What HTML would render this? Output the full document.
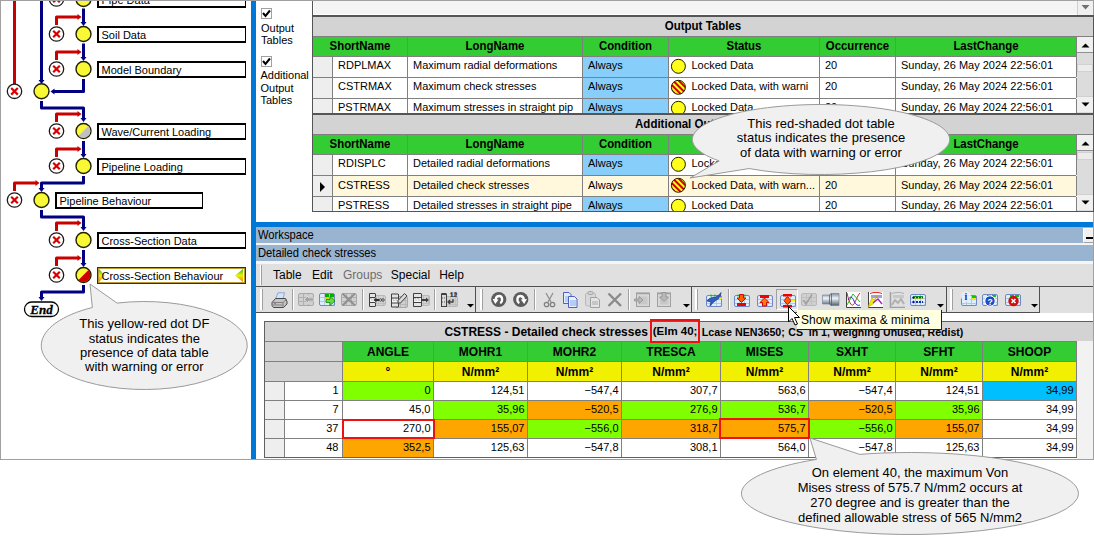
<!DOCTYPE html>
<html><head><meta charset="utf-8"><style>
*{box-sizing:border-box;margin:0;padding:0}
html,body{width:1094px;height:536px;overflow:hidden;background:#fff;font-family:"Liberation Sans", sans-serif;font-size:11px;color:#000}
.a{position:absolute}
.t{position:absolute;white-space:nowrap;line-height:1}
.c{position:absolute;white-space:nowrap;line-height:1;text-align:center}
.b{font-weight:bold}
</style></head><body>

<div class="a" style="left:0;top:0;width:251px;height:460px;border-left:1px solid #a0a0a0;border-top:1px solid #a0a0a0;border-bottom:1px solid #a0a0a0"></div>
<svg class="a" style="left:0;top:0" width="251" height="459"><line x1="14.5" y1="0" x2="14.5" y2="84" stroke="#c80000" stroke-width="3"/><line x1="41.5" y1="0" x2="41.5" y2="80" stroke="#000080" stroke-width="3"/><polygon points="41.5,84 38.5,80 44.5,80" fill="#000080"/><circle cx="56.5" cy="-1" r="7.2" fill="#fff" stroke="#1a1a1a" stroke-width="1.3"/><path d="M53.2,-4.3L59.8,2.3M59.8,-4.3L53.2,2.3" stroke="#d80000" stroke-width="2.2"/><circle cx="83.5" cy="-1" r="7.5" fill="#f8f835" stroke="#202000" stroke-width="1.4"/><polyline points="56.5,-10 56.5,-18 78.0,-18" fill="none" stroke="#c80000" stroke-width="3" stroke-linejoin="round"/><polygon points="81.5,-18 77.5,-21 77.5,-15" fill="#c80000"/><circle cx="56.5" cy="34" r="7.2" fill="#fff" stroke="#1a1a1a" stroke-width="1.3"/><path d="M53.2,30.7L59.8,37.3M59.8,30.7L53.2,37.3" stroke="#d80000" stroke-width="2.2"/><circle cx="83.5" cy="34" r="7.5" fill="#f8f835" stroke="#202000" stroke-width="1.4"/><polyline points="56.5,25 56.5,17 78.0,17" fill="none" stroke="#c80000" stroke-width="3" stroke-linejoin="round"/><polygon points="81.5,17 77.5,14 77.5,20" fill="#c80000"/><line x1="83.5" y1="8.5" x2="83.5" y2="22.5" stroke="#000080" stroke-width="3"/><polygon points="83.5,26 80.5,22 86.5,22" fill="#000080"/><circle cx="56.5" cy="69" r="7.2" fill="#fff" stroke="#1a1a1a" stroke-width="1.3"/><path d="M53.2,65.7L59.8,72.3M59.8,65.7L53.2,72.3" stroke="#d80000" stroke-width="2.2"/><circle cx="83.5" cy="69" r="7.5" fill="#f8f835" stroke="#202000" stroke-width="1.4"/><polyline points="56.5,60 56.5,52 78.0,52" fill="none" stroke="#c80000" stroke-width="3" stroke-linejoin="round"/><polygon points="81.5,52 77.5,49 77.5,55" fill="#c80000"/><line x1="83.5" y1="43.5" x2="83.5" y2="57.5" stroke="#000080" stroke-width="3"/><polygon points="83.5,61 80.5,57 86.5,57" fill="#000080"/><circle cx="14.5" cy="91.3" r="7.2" fill="#fff" stroke="#1a1a1a" stroke-width="1.3"/><path d="M11.2,88.0L17.8,94.6M17.8,88.0L11.2,94.6" stroke="#d80000" stroke-width="2.2"/><circle cx="41.5" cy="91.3" r="7.5" fill="#f8f835" stroke="#202000" stroke-width="1.4"/><polyline points="83.5,79 83.5,91.5 54.0,91.5" fill="none" stroke="#000080" stroke-width="3" stroke-linejoin="round"/><polygon points="50.5,91.5 54.5,88.5 54.5,94.5" fill="#000080"/><polyline points="41.5,101 41.5,108 83.5,108 83.5,118.5" fill="none" stroke="#000080" stroke-width="3" stroke-linejoin="round"/><polygon points="83.5,122 80.5,118 86.5,118" fill="#000080"/><circle cx="56.5" cy="131" r="7.2" fill="#fff" stroke="#1a1a1a" stroke-width="1.3"/><path d="M53.2,127.7L59.8,134.3M59.8,127.7L53.2,134.3" stroke="#d80000" stroke-width="2.2"/><circle cx="83.5" cy="131" r="7.5" fill="#f8f835" stroke="#202000" stroke-width="1.4"/><path d="M88.449,126.051 A7,7 0 0 1 78.551,135.949 Z" fill="#c0c0c0"/><polyline points="56.5,122 56.5,114 78.0,114" fill="none" stroke="#c80000" stroke-width="3" stroke-linejoin="round"/><polygon points="81.5,114 77.5,111 77.5,117" fill="#c80000"/><circle cx="56.5" cy="166" r="7.2" fill="#fff" stroke="#1a1a1a" stroke-width="1.3"/><path d="M53.2,162.7L59.8,169.3M59.8,162.7L53.2,169.3" stroke="#d80000" stroke-width="2.2"/><circle cx="83.5" cy="166" r="7.5" fill="#f8f835" stroke="#202000" stroke-width="1.4"/><polyline points="56.5,157 56.5,149 78.0,149" fill="none" stroke="#c80000" stroke-width="3" stroke-linejoin="round"/><polygon points="81.5,149 77.5,146 77.5,152" fill="#c80000"/><line x1="83.5" y1="141" x2="83.5" y2="154.5" stroke="#000080" stroke-width="3"/><polygon points="83.5,158 80.5,154 86.5,154" fill="#000080"/><polyline points="83.5,176 83.5,183 41.5,183 41.5,188.5" fill="none" stroke="#000080" stroke-width="3" stroke-linejoin="round"/><polygon points="41.5,192 38.5,188 44.5,188" fill="#000080"/><circle cx="14.5" cy="200" r="7.2" fill="#fff" stroke="#1a1a1a" stroke-width="1.3"/><path d="M11.2,196.7L17.8,203.3M17.8,196.7L11.2,203.3" stroke="#d80000" stroke-width="2.2"/><circle cx="41.5" cy="200" r="7.5" fill="#f8f835" stroke="#202000" stroke-width="1.4"/><polyline points="14.5,191 14.5,183 36.0,183" fill="none" stroke="#c80000" stroke-width="3" stroke-linejoin="round"/><polygon points="39.5,183 35.5,180 35.5,186" fill="#c80000"/><polyline points="41.5,210 41.5,217 83.5,217 83.5,227.5" fill="none" stroke="#000080" stroke-width="3" stroke-linejoin="round"/><polygon points="83.5,231 80.5,227 86.5,227" fill="#000080"/><circle cx="56.5" cy="240" r="7.2" fill="#fff" stroke="#1a1a1a" stroke-width="1.3"/><path d="M53.2,236.7L59.8,243.3M59.8,236.7L53.2,243.3" stroke="#d80000" stroke-width="2.2"/><circle cx="83.5" cy="240" r="7.5" fill="#f8f835" stroke="#202000" stroke-width="1.4"/><polyline points="56.5,231 56.5,223 78.0,223" fill="none" stroke="#c80000" stroke-width="3" stroke-linejoin="round"/><polygon points="81.5,223 77.5,220 77.5,226" fill="#c80000"/><circle cx="56.5" cy="275" r="7.2" fill="#fff" stroke="#1a1a1a" stroke-width="1.3"/><path d="M53.2,271.7L59.8,278.3M59.8,271.7L53.2,278.3" stroke="#d80000" stroke-width="2.2"/><circle cx="83.5" cy="275" r="7.5" fill="#f8f835" stroke="#202000" stroke-width="1.4"/><path d="M88.449,270.051 A7,7 0 0 1 78.551,279.949 Z" fill="#d00000"/><polyline points="56.5,266 56.5,258 78.0,258" fill="none" stroke="#c80000" stroke-width="3" stroke-linejoin="round"/><polygon points="81.5,258 77.5,255 77.5,261" fill="#c80000"/><line x1="83.5" y1="250" x2="83.5" y2="263.5" stroke="#000080" stroke-width="3"/><polygon points="83.5,267 80.5,263 86.5,263" fill="#000080"/><polyline points="83.5,285 83.5,292 41.5,292 41.5,297.5" fill="none" stroke="#000080" stroke-width="3" stroke-linejoin="round"/><polygon points="41.5,301 38.5,297 44.5,297" fill="#000080"/><rect x="24.5" y="302" width="34" height="14.5" rx="7.2" fill="#fff" stroke="#000" stroke-width="1.3"/><text x="41.5" y="314" text-anchor="middle" font-family="Liberation Serif" font-weight="bold" font-style="italic" font-size="13" stroke="#000" stroke-width="0.3">End</text></svg>
<div class="a" style="left:97px;top:-9px;width:149px;height:17px;border:2px solid #000;border-right-width:1px;background:#fff"></div>
<div class="t" style="left:101.5px;top:-5.2px;font-size:11px;transform:scaleY(1.07);transform-origin:0 84.65%">Pipe Data</div>
<div class="a" style="left:97px;top:26px;width:149px;height:17px;border:2px solid #000;border-right-width:1px;background:#fff"></div>
<div class="t" style="left:101.5px;top:29.8px;font-size:11px;transform:scaleY(1.07);transform-origin:0 84.65%">Soil Data</div>
<div class="a" style="left:97px;top:61px;width:149px;height:17px;border:2px solid #000;border-right-width:1px;background:#fff"></div>
<div class="t" style="left:101.5px;top:64.8px;font-size:11px;transform:scaleY(1.07);transform-origin:0 84.65%">Model Boundary</div>
<div class="a" style="left:97px;top:123px;width:149px;height:17px;border:2px solid #000;border-right-width:1px;background:#fff"></div>
<div class="t" style="left:101.5px;top:126.8px;font-size:11px;transform:scaleY(1.07);transform-origin:0 84.65%">Wave/Current Loading</div>
<div class="a" style="left:97px;top:158px;width:149px;height:17px;border:2px solid #000;border-right-width:1px;background:#fff"></div>
<div class="t" style="left:101.5px;top:161.8px;font-size:11px;transform:scaleY(1.07);transform-origin:0 84.65%">Pipeline Loading</div>
<div class="a" style="left:55px;top:192px;width:148px;height:17px;border:2px solid #000;border-right-width:1px;background:#fff"></div>
<div class="t" style="left:59.5px;top:195.8px;font-size:11px;transform:scaleY(1.07);transform-origin:0 84.65%">Pipeline Behaviour</div>
<div class="a" style="left:97px;top:232px;width:149px;height:17px;border:2px solid #000;border-right-width:1px;background:#fff"></div>
<div class="t" style="left:101.5px;top:235.8px;font-size:11px;transform:scaleY(1.07);transform-origin:0 84.65%">Cross-Section Data</div>
<div class="a" style="left:97px;top:267px;width:149px;height:17px;border:2px solid #3a3000;border-right-width:1px;background:#fff"></div>
<div class="a" style="left:98px;top:268px;width:147px;height:15px;border:1px solid #b89a30"></div>
<svg class="a" style="left:99px;top:269px" width="145" height="13"><defs><linearGradient id="tg" x1="0" y1="0" x2="0" y2="1"><stop offset="0" stop-color="#20c020"/><stop offset="0.5" stop-color="#f0f000"/><stop offset="1" stop-color="#f08000"/></linearGradient></defs><polygon points="0,0 6,6.5 0,13" fill="url(#tg)"/><polygon points="144,0 136,6.5 144,13" fill="url(#tg)"/></svg>
<div class="t" style="left:101.5px;top:270.8px;font-size:11px;transform:scaleY(1.07);transform-origin:0 84.65%">Cross-Section Behaviour</div>
<div class="a" style="left:251px;top:1px;width:5px;height:458px;background:#0078d7"></div>
<div class="a" style="left:256px;top:222px;width:837px;height:5px;background:#0078d7"></div>
<div class="a" style="left:256px;top:0;width:838px;height:1px;background:#a0a0a0"></div>
<div class="a" style="left:1093px;top:0;width:1px;height:460px;background:#a0a0a0"></div>
<div class="a" style="left:261px;top:8px;width:11px;height:11px;border:1px solid #a0a0a0;background:#fff"></div>
<svg class="a" style="left:261px;top:8px" width="11" height="11"><path d="M2,5 L4.5,8 L9,2.5" fill="none" stroke="#000" stroke-width="2"/></svg>
<div class="t" style="left:261px;top:21.7px;font-size:11px;line-height:12.6px">Output<br>Tables</div>
<div class="a" style="left:261px;top:56px;width:11px;height:11px;border:1px solid #a0a0a0;background:#fff"></div>
<svg class="a" style="left:261px;top:56px" width="11" height="11"><path d="M2,5 L4.5,8 L9,2.5" fill="none" stroke="#000" stroke-width="2"/></svg>
<div class="t" style="left:260.5px;top:69.4px;font-size:11px;line-height:12.3px">Additional<br>Output<br>Tables</div>
<div class="a" style="left:312px;top:1px;width:1px;height:211px;background:#555555;"></div>
<div class="a" style="left:313px;top:1px;width:764px;height:14px;background:#f4f4f4;border-left:1px solid #fff;border-bottom:1px solid #fff"></div>
<div class="a" style="left:1077px;top:1px;width:16px;height:14px;background:#f0f0f0;border-left:1px solid #d0d0d0"></div>
<svg class="a" style="left:1081px;top:5px" width="9" height="5"><polygon points="0.5,0 8.5,0 4.5,4.5" fill="#707070"/></svg>
<div class="a" style="left:312px;top:15px;width:782px;height:2px;background:#555555;"></div>
<div class="a" style="left:313px;top:17px;width:780px;height:19px;background:#d3d3d3;"></div>
<div class="a" style="left:313px;top:36px;width:780px;height:1px;background:#808080;"></div>
<div class="t" style="left:313px;width:780px;text-align:center;top:20.97px;font-size:11.5px;font-weight:bold;color:#000;transform:scaleY(1.12);transform-origin:0 84.65%;">Output Tables</div>
<div class="a" style="left:313px;top:37px;width:763px;height:19px;background:#33cc33;"></div>
<div class="a" style="left:313px;top:56px;width:763px;height:1px;background:#808080;"></div>
<div class="t" style="left:313px;width:94px;text-align:center;top:41.25px;font-size:11.4px;font-weight:bold;color:#000;transform:scaleY(1.1);transform-origin:0 84.65%;">ShortName</div>
<div class="a" style="left:407px;top:37px;width:1px;height:20px;background:#808080;"></div>
<div class="t" style="left:408px;width:174px;text-align:center;top:41.25px;font-size:11.4px;font-weight:bold;color:#000;transform:scaleY(1.1);transform-origin:0 84.65%;">LongName</div>
<div class="a" style="left:582px;top:37px;width:1px;height:20px;background:#808080;"></div>
<div class="t" style="left:583px;width:85px;text-align:center;top:41.25px;font-size:11.4px;font-weight:bold;color:#000;transform:scaleY(1.1);transform-origin:0 84.65%;">Condition</div>
<div class="a" style="left:668px;top:37px;width:1px;height:20px;background:#808080;"></div>
<div class="t" style="left:669px;width:150px;text-align:center;top:41.25px;font-size:11.4px;font-weight:bold;color:#000;transform:scaleY(1.1);transform-origin:0 84.65%;">Status</div>
<div class="a" style="left:819px;top:37px;width:1px;height:20px;background:#808080;"></div>
<div class="t" style="left:820px;width:75px;text-align:center;top:41.25px;font-size:11.4px;font-weight:bold;color:#000;transform:scaleY(1.1);transform-origin:0 84.65%;">Occurrence</div>
<div class="a" style="left:895px;top:37px;width:1px;height:20px;background:#808080;"></div>
<div class="t" style="left:896px;width:180px;text-align:center;top:41.25px;font-size:11.4px;font-weight:bold;color:#000;transform:scaleY(1.1);transform-origin:0 84.65%;">LastChange</div>
<div class="a" style="left:1076px;top:37px;width:1px;height:20px;background:#808080;"></div>
<div class="a" style="left:313px;top:57px;width:19px;height:20px;background:#eeeeee;"></div>
<div class="a" style="left:332px;top:57px;width:1px;height:20px;background:#808080;"></div>
<div class="a" style="left:333px;top:57px;width:743px;height:20px;background:#fff;"></div>
<div class="a" style="left:583px;top:57px;width:85px;height:20px;background:#87cefa;"></div>
<div class="a" style="left:407px;top:57px;width:1px;height:20px;background:#808080;"></div>
<div class="a" style="left:582px;top:57px;width:1px;height:20px;background:#808080;"></div>
<div class="a" style="left:668px;top:57px;width:1px;height:20px;background:#808080;"></div>
<div class="a" style="left:819px;top:57px;width:1px;height:20px;background:#808080;"></div>
<div class="a" style="left:895px;top:57px;width:1px;height:20px;background:#808080;"></div>
<div class="a" style="left:1076px;top:57px;width:1px;height:20px;background:#808080;"></div>
<div class="a" style="left:313px;top:77px;width:763px;height:1px;background:#808080;"></div>
<div class="t" style="left:338px;top:59.89px;font-size:11px;color:#000;transform:scaleY(1.06);transform-origin:0 84.65%;">RDPLMAX</div>
<div class="t" style="left:413px;top:59.89px;font-size:11px;color:#000;transform:scaleY(1.06);transform-origin:0 84.65%;">Maximum radial deformations</div>
<div class="t" style="left:588px;top:59.89px;font-size:11px;color:#000;transform:scaleY(1.06);transform-origin:0 84.65%;">Always</div>
<svg class="a" style="left:669px;top:57px" width="20" height="20"><circle cx="9.4" cy="9.3" r="7" fill="#ffff1a" stroke="#202000" stroke-width="1"/></svg>
<div class="a" style="left:689px;top:57px;width:130px;height:20px;overflow:hidden"><div class="t" style="left:2.5px;top:2.89px">Locked Data</div></div>
<div class="t" style="left:825px;top:59.89px;font-size:11px;color:#000;transform:scaleY(1.06);transform-origin:0 84.65%;">20</div>
<div class="t" style="left:901px;top:59.89px;font-size:11px;color:#000;transform:scaleY(1.06);transform-origin:0 84.65%;">Sunday, 26 May 2024 22:56:01</div>
<div class="a" style="left:313px;top:78px;width:19px;height:20px;background:#eeeeee;"></div>
<div class="a" style="left:332px;top:78px;width:1px;height:20px;background:#808080;"></div>
<div class="a" style="left:333px;top:78px;width:743px;height:20px;background:#fff;"></div>
<div class="a" style="left:583px;top:78px;width:85px;height:20px;background:#87cefa;"></div>
<div class="a" style="left:407px;top:78px;width:1px;height:20px;background:#808080;"></div>
<div class="a" style="left:582px;top:78px;width:1px;height:20px;background:#808080;"></div>
<div class="a" style="left:668px;top:78px;width:1px;height:20px;background:#808080;"></div>
<div class="a" style="left:819px;top:78px;width:1px;height:20px;background:#808080;"></div>
<div class="a" style="left:895px;top:78px;width:1px;height:20px;background:#808080;"></div>
<div class="a" style="left:1076px;top:78px;width:1px;height:20px;background:#808080;"></div>
<div class="a" style="left:313px;top:98px;width:763px;height:1px;background:#808080;"></div>
<div class="t" style="left:338px;top:80.89px;font-size:11px;color:#000;transform:scaleY(1.06);transform-origin:0 84.65%;">CSTRMAX</div>
<div class="t" style="left:413px;top:80.89px;font-size:11px;color:#000;transform:scaleY(1.06);transform-origin:0 84.65%;">Maximum check stresses</div>
<div class="t" style="left:588px;top:80.89px;font-size:11px;color:#000;transform:scaleY(1.06);transform-origin:0 84.65%;">Always</div>
<svg class="a" style="left:669px;top:78px" width="20" height="20"><defs><pattern id="st17" width="4" height="4" patternUnits="userSpaceOnUse" patternTransform="rotate(-45)"><rect width="4" height="4" fill="#ffff1a"/><rect width="2" height="4" fill="#d00000"/></pattern></defs><circle cx="9.4" cy="9.3" r="7" fill="url(#st17)" stroke="#202000" stroke-width="1"/></svg>
<div class="a" style="left:689px;top:78px;width:130px;height:20px;overflow:hidden"><div class="t" style="left:2.5px;top:2.89px">Locked Data, with warni</div></div>
<div class="t" style="left:825px;top:80.89px;font-size:11px;color:#000;transform:scaleY(1.06);transform-origin:0 84.65%;">20</div>
<div class="t" style="left:901px;top:80.89px;font-size:11px;color:#000;transform:scaleY(1.06);transform-origin:0 84.65%;">Sunday, 26 May 2024 22:56:01</div>
<div class="a" style="left:313px;top:99px;width:19px;height:14px;background:#eeeeee;"></div>
<div class="a" style="left:332px;top:99px;width:1px;height:14px;background:#808080;"></div>
<div class="a" style="left:333px;top:99px;width:743px;height:14px;background:#fff;"></div>
<div class="a" style="left:583px;top:99px;width:85px;height:14px;background:#87cefa;"></div>
<div class="a" style="left:407px;top:99px;width:1px;height:14px;background:#808080;"></div>
<div class="a" style="left:582px;top:99px;width:1px;height:14px;background:#808080;"></div>
<div class="a" style="left:668px;top:99px;width:1px;height:14px;background:#808080;"></div>
<div class="a" style="left:819px;top:99px;width:1px;height:14px;background:#808080;"></div>
<div class="a" style="left:895px;top:99px;width:1px;height:14px;background:#808080;"></div>
<div class="a" style="left:1076px;top:99px;width:1px;height:14px;background:#808080;"></div>
<div class="t" style="left:338px;top:101.89px;font-size:11px;color:#000;transform:scaleY(1.06);transform-origin:0 84.65%;">PSTRMAX</div>
<div class="t" style="left:413px;top:101.89px;font-size:11px;color:#000;transform:scaleY(1.06);transform-origin:0 84.65%;">Maximum stresses in straight pip</div>
<div class="t" style="left:588px;top:101.89px;font-size:11px;color:#000;transform:scaleY(1.06);transform-origin:0 84.65%;">Always</div>
<svg class="a" style="left:669px;top:99px" width="20" height="14"><circle cx="9.4" cy="9.3" r="7" fill="#ffff1a" stroke="#202000" stroke-width="1"/></svg>
<div class="a" style="left:689px;top:99px;width:130px;height:14px;overflow:hidden"><div class="t" style="left:2.5px;top:2.89px">Locked Data</div></div>
<div class="t" style="left:825px;top:101.89px;font-size:11px;color:#000;transform:scaleY(1.06);transform-origin:0 84.65%;">20</div>
<div class="t" style="left:901px;top:101.89px;font-size:11px;color:#000;transform:scaleY(1.06);transform-origin:0 84.65%;">Sunday, 26 May 2024 22:56:01</div>
<div class="a" style="left:1077px;top:37px;width:16px;height:16px;background:#f0f0f0;border-bottom:1px solid #909090"></div>
<svg class="a" style="left:1081px;top:43px" width="9" height="5"><polygon points="0.5,4.5 4.5,0.5 8.5,4.5" fill="#000"/></svg>
<div class="a" style="left:1077px;top:53px;width:16px;height:60px;background:#dcdcdc;"></div>
<div class="a" style="left:1077px;top:64px;width:16px;height:8px;background:#ececec;border:1px solid #d0d0d0"></div>
<div class="a" style="left:1077px;top:96px;width:16px;height:16px;background:#f0f0f0;border-top:1px solid #d0d0d0"></div>
<svg class="a" style="left:1081px;top:102px" width="9" height="5"><polygon points="0.5,0.5 8.5,0.5 4.5,4.5" fill="#000"/></svg>
<div class="a" style="left:1093px;top:15px;width:1px;height:98px;background:#555555;"></div>
<div class="a" style="left:312px;top:113px;width:782px;height:2px;background:#555555;"></div>
<div class="a" style="left:313px;top:115px;width:780px;height:19px;background:#d3d3d3;"></div>
<div class="a" style="left:313px;top:134px;width:780px;height:1px;background:#808080;"></div>
<div class="t" style="left:313px;width:780px;text-align:center;top:118.97px;font-size:11.5px;font-weight:bold;color:#000;transform:scaleY(1.12);transform-origin:0 84.65%;">Additional Output Tables</div>
<div class="a" style="left:313px;top:135px;width:763px;height:19px;background:#33cc33;"></div>
<div class="a" style="left:313px;top:154px;width:763px;height:1px;background:#808080;"></div>
<div class="t" style="left:313px;width:94px;text-align:center;top:139.25px;font-size:11.4px;font-weight:bold;color:#000;transform:scaleY(1.1);transform-origin:0 84.65%;">ShortName</div>
<div class="a" style="left:407px;top:135px;width:1px;height:20px;background:#808080;"></div>
<div class="t" style="left:408px;width:174px;text-align:center;top:139.25px;font-size:11.4px;font-weight:bold;color:#000;transform:scaleY(1.1);transform-origin:0 84.65%;">LongName</div>
<div class="a" style="left:582px;top:135px;width:1px;height:20px;background:#808080;"></div>
<div class="t" style="left:583px;width:85px;text-align:center;top:139.25px;font-size:11.4px;font-weight:bold;color:#000;transform:scaleY(1.1);transform-origin:0 84.65%;">Condition</div>
<div class="a" style="left:668px;top:135px;width:1px;height:20px;background:#808080;"></div>
<div class="t" style="left:669px;width:150px;text-align:center;top:139.25px;font-size:11.4px;font-weight:bold;color:#000;transform:scaleY(1.1);transform-origin:0 84.65%;">Status</div>
<div class="a" style="left:819px;top:135px;width:1px;height:20px;background:#808080;"></div>
<div class="t" style="left:820px;width:75px;text-align:center;top:139.25px;font-size:11.4px;font-weight:bold;color:#000;transform:scaleY(1.1);transform-origin:0 84.65%;">Occurrence</div>
<div class="a" style="left:895px;top:135px;width:1px;height:20px;background:#808080;"></div>
<div class="t" style="left:896px;width:180px;text-align:center;top:139.25px;font-size:11.4px;font-weight:bold;color:#000;transform:scaleY(1.1);transform-origin:0 84.65%;">LastChange</div>
<div class="a" style="left:1076px;top:135px;width:1px;height:20px;background:#808080;"></div>
<div class="a" style="left:313px;top:155px;width:19px;height:20px;background:#eeeeee;"></div>
<div class="a" style="left:332px;top:155px;width:1px;height:20px;background:#808080;"></div>
<div class="a" style="left:333px;top:155px;width:743px;height:20px;background:#fff;"></div>
<div class="a" style="left:583px;top:155px;width:85px;height:20px;background:#87cefa;"></div>
<div class="a" style="left:407px;top:155px;width:1px;height:20px;background:#808080;"></div>
<div class="a" style="left:582px;top:155px;width:1px;height:20px;background:#808080;"></div>
<div class="a" style="left:668px;top:155px;width:1px;height:20px;background:#808080;"></div>
<div class="a" style="left:819px;top:155px;width:1px;height:20px;background:#808080;"></div>
<div class="a" style="left:895px;top:155px;width:1px;height:20px;background:#808080;"></div>
<div class="a" style="left:1076px;top:155px;width:1px;height:20px;background:#808080;"></div>
<div class="a" style="left:313px;top:175px;width:763px;height:1px;background:#808080;"></div>
<div class="t" style="left:338px;top:157.89px;font-size:11px;color:#000;transform:scaleY(1.06);transform-origin:0 84.65%;">RDISPLC</div>
<div class="t" style="left:413px;top:157.89px;font-size:11px;color:#000;transform:scaleY(1.06);transform-origin:0 84.65%;">Detailed radial deformations</div>
<div class="t" style="left:588px;top:157.89px;font-size:11px;color:#000;transform:scaleY(1.06);transform-origin:0 84.65%;">Always</div>
<svg class="a" style="left:669px;top:155px" width="20" height="20"><circle cx="9.4" cy="9.3" r="7" fill="#ffff1a" stroke="#202000" stroke-width="1"/></svg>
<div class="a" style="left:689px;top:155px;width:130px;height:20px;overflow:hidden"><div class="t" style="left:2.5px;top:2.89px">Locked Data</div></div>
<div class="t" style="left:825px;top:157.89px;font-size:11px;color:#000;transform:scaleY(1.06);transform-origin:0 84.65%;">20</div>
<div class="t" style="left:901px;top:157.89px;font-size:11px;color:#000;transform:scaleY(1.06);transform-origin:0 84.65%;">Sunday, 26 May 2024 22:56:01</div>
<div class="a" style="left:313px;top:176px;width:19px;height:20px;background:#eeeeee;"></div>
<div class="a" style="left:332px;top:176px;width:1px;height:20px;background:#808080;"></div>
<div class="a" style="left:333px;top:176px;width:743px;height:20px;background:#fff8dc;"></div>
<div class="a" style="left:583px;top:176px;width:85px;height:20px;background:#fff8dc;"></div>
<div class="a" style="left:407px;top:176px;width:1px;height:20px;background:#808080;"></div>
<div class="a" style="left:582px;top:176px;width:1px;height:20px;background:#808080;"></div>
<div class="a" style="left:668px;top:176px;width:1px;height:20px;background:#808080;"></div>
<div class="a" style="left:819px;top:176px;width:1px;height:20px;background:#808080;"></div>
<div class="a" style="left:895px;top:176px;width:1px;height:20px;background:#808080;"></div>
<div class="a" style="left:1076px;top:176px;width:1px;height:20px;background:#808080;"></div>
<div class="a" style="left:313px;top:196px;width:763px;height:1px;background:#808080;"></div>
<svg class="a" style="left:319px;top:182px" width="8" height="10"><polygon points="1,0 6,5 1,10" fill="#000"/></svg>
<div class="t" style="left:338px;top:180.29px;font-size:11px;color:#000;transform:scaleY(1.06);transform-origin:0 84.65%;">CSTRESS</div>
<div class="t" style="left:413px;top:180.29px;font-size:11px;color:#000;transform:scaleY(1.06);transform-origin:0 84.65%;">Detailed check stresses</div>
<div class="t" style="left:588px;top:180.29px;font-size:11px;color:#000;transform:scaleY(1.06);transform-origin:0 84.65%;">Always</div>
<svg class="a" style="left:669px;top:176px" width="20" height="20"><defs><pattern id="st115" width="4" height="4" patternUnits="userSpaceOnUse" patternTransform="rotate(-45)"><rect width="4" height="4" fill="#ffff1a"/><rect width="2" height="4" fill="#d00000"/></pattern></defs><circle cx="9.4" cy="9.3" r="7" fill="url(#st115)" stroke="#202000" stroke-width="1"/></svg>
<div class="a" style="left:689px;top:176px;width:130px;height:20px;overflow:hidden"><div class="t" style="left:2.5px;top:4.29px">Locked Data, with warn...</div></div>
<div class="t" style="left:825px;top:180.29px;font-size:11px;color:#000;transform:scaleY(1.06);transform-origin:0 84.65%;">20</div>
<div class="t" style="left:901px;top:180.29px;font-size:11px;color:#000;transform:scaleY(1.06);transform-origin:0 84.65%;">Sunday, 26 May 2024 22:56:01</div>
<div class="a" style="left:313px;top:197px;width:19px;height:14px;background:#eeeeee;"></div>
<div class="a" style="left:332px;top:197px;width:1px;height:14px;background:#808080;"></div>
<div class="a" style="left:333px;top:197px;width:743px;height:14px;background:#fff;"></div>
<div class="a" style="left:583px;top:197px;width:85px;height:14px;background:#87cefa;"></div>
<div class="a" style="left:407px;top:197px;width:1px;height:14px;background:#808080;"></div>
<div class="a" style="left:582px;top:197px;width:1px;height:14px;background:#808080;"></div>
<div class="a" style="left:668px;top:197px;width:1px;height:14px;background:#808080;"></div>
<div class="a" style="left:819px;top:197px;width:1px;height:14px;background:#808080;"></div>
<div class="a" style="left:895px;top:197px;width:1px;height:14px;background:#808080;"></div>
<div class="a" style="left:1076px;top:197px;width:1px;height:14px;background:#808080;"></div>
<div class="t" style="left:338px;top:199.89px;font-size:11px;color:#000;transform:scaleY(1.06);transform-origin:0 84.65%;">PSTRESS</div>
<div class="t" style="left:413px;top:199.89px;font-size:11px;color:#000;transform:scaleY(1.06);transform-origin:0 84.65%;">Detailed stresses in straight pipe</div>
<div class="t" style="left:588px;top:199.89px;font-size:11px;color:#000;transform:scaleY(1.06);transform-origin:0 84.65%;">Always</div>
<svg class="a" style="left:669px;top:197px" width="20" height="14"><circle cx="9.4" cy="9.3" r="7" fill="#ffff1a" stroke="#202000" stroke-width="1"/></svg>
<div class="a" style="left:689px;top:197px;width:130px;height:14px;overflow:hidden"><div class="t" style="left:2.5px;top:2.89px">Locked Data</div></div>
<div class="t" style="left:825px;top:199.89px;font-size:11px;color:#000;transform:scaleY(1.06);transform-origin:0 84.65%;">20</div>
<div class="t" style="left:901px;top:199.89px;font-size:11px;color:#000;transform:scaleY(1.06);transform-origin:0 84.65%;">Sunday, 26 May 2024 22:56:01</div>
<div class="a" style="left:1077px;top:135px;width:16px;height:16px;background:#f0f0f0;border-bottom:1px solid #909090"></div>
<svg class="a" style="left:1081px;top:141px" width="9" height="5"><polygon points="0.5,4.5 4.5,0.5 8.5,4.5" fill="#000"/></svg>
<div class="a" style="left:1077px;top:151px;width:16px;height:60px;background:#dcdcdc;"></div>
<div class="a" style="left:1077px;top:152px;width:16px;height:8px;background:#ececec;border:1px solid #d0d0d0"></div>
<div class="a" style="left:1077px;top:194px;width:16px;height:16px;background:#f0f0f0;border-top:1px solid #d0d0d0"></div>
<svg class="a" style="left:1081px;top:200px" width="9" height="5"><polygon points="0.5,0.5 8.5,0.5 4.5,4.5" fill="#000"/></svg>
<div class="a" style="left:1093px;top:113px;width:1px;height:98px;background:#555555;"></div>
<div class="a" style="left:312px;top:211px;width:782px;height:1px;background:#555555;"></div>
<div class="a" style="left:256px;top:227px;width:837px;height:16px;background:#99b4d1;"></div>
<div class="a" style="left:256px;top:243px;width:837px;height:2px;background:#f4f4f4;"></div>
<div class="a" style="left:256px;top:245px;width:837px;height:16px;background:#99b4d1;"></div>
<div class="t" style="left:258px;top:229.72px;font-size:11.2px;color:#000;transform:scaleY(1.08);transform-origin:0 84.65%;">Workspace</div>
<div class="t" style="left:258px;top:247.52px;font-size:11.2px;color:#000;transform:scaleY(1.08);transform-origin:0 84.65%;">Detailed check stresses</div>
<div class="a" style="left:1083px;top:228px;width:10px;height:15px;background:#f0f0f0;border-left:1px solid #fff;border-top:1px solid #fff;border-bottom:1px solid #a0a0a0"></div>
<div class="a" style="left:1086px;top:237px;width:7px;height:2px;background:#000;"></div>
<div class="a" style="left:256px;top:261px;width:837px;height:3px;background:#f5f5f5;"></div>
<div class="a" style="left:256px;top:264px;width:837px;height:22px;background:#e0e0e0;"></div>
<div class="a" style="left:260px;top:265px;width:2px;height:20px;background:#fff;border-right:1px solid #a0a0a0"></div>
<div class="t" style="left:273px;top:269.04px;font-size:12px;color:#000;">Table</div>
<div class="t" style="left:312px;top:269.04px;font-size:12px;color:#000;">Edit</div>
<div class="t" style="left:343px;top:269.04px;font-size:12px;color:#6d6d6d;">Groups</div>
<div class="t" style="left:390.8px;top:269.04px;font-size:12px;color:#000;">Special</div>
<div class="t" style="left:439.2px;top:269.04px;font-size:12px;color:#000;">Help</div>
<div class="a" style="left:256px;top:286px;width:837px;height:1px;background:#505050;"></div>
<div class="a" style="left:256px;top:287px;width:837px;height:25px;background:#e0e0e0;"></div>
<div class="a" style="left:256px;top:312px;width:784px;height:1px;background:#505050;"></div>
<div class="a" style="left:475px;top:286px;width:1px;height:27px;background:#505050;"></div>
<div class="a" style="left:691px;top:286px;width:1px;height:27px;background:#505050;"></div>
<div class="a" style="left:946px;top:286px;width:1px;height:27px;background:#505050;"></div>
<div class="a" style="left:1039px;top:286px;width:1px;height:27px;background:#505050;"></div>
<div class="a" style="left:1040px;top:312px;width:53px;height:1px;background:#e0e0e0;"></div>
<svg class="a" style="left:271px;top:292px" width="17" height="16" viewBox="0 0 17 16"><path d="M4.5,7 L7,0.8 L13.5,0.8 L12,7Z" fill="#d0e4ff" stroke="#8098c8" stroke-width="0.8"/><path d="M1,10.5 L4.5,6.5 L14.5,6.5 L16,9.5 V12 L12.5,15.5 H2.5 L1,13.5Z" fill="#c4c4c4" stroke="#484848" stroke-width="1"/><path d="M1.5,10.5 H12 L16,7 M12,10.5 V15 M2,13 H11.5" fill="none" stroke="#7a7a7a" stroke-width="0.9"/><rect x="3" y="11.2" width="2" height="1" fill="#3a3"/></svg>
<div class="a" style="left:260px;top:289px;width:3px;height:21px;border-left:2px solid #fff;border-right:1px solid #a0a0a0"></div>
<div class="a" style="left:292px;top:289px;width:2px;height:21px;border-left:1px solid #a0a0a0;border-right:1px solid #fff"></div>
<svg class="a" style="left:298px;top:293px" width="17" height="14" viewBox="0 0 17 14"><rect x="0.5" y="0.5" width="15" height="12" rx="1.5" fill="#d0d0d0" stroke="#a8a8a8"/><path d="M1,4.5H15M1,8.5H15M5.5,1V12M10.5,1V12" stroke="#b0b0b0" stroke-width="1"/><path d="M6.5,6.5 L10.5,2.5 V5 H16 V8 H10.5 V10.5Z" fill="#a0a0a0" stroke="#e8e8e8" stroke-width="0.7"/></svg>
<svg class="a" style="left:319px;top:293px" width="17" height="14" viewBox="0 0 17 14"><rect x="1" y="1" width="15" height="12" rx="1.5" fill="#7f8fb8"/><rect x="0.5" y="0.5" width="15" height="12" rx="1.5" fill="#dcefff" stroke="#7088c8"/><path d="M1,4.5H15M1,8.5H15M5.5,1V12M10.5,1V12" stroke="#b8c8d8" stroke-width="1"/><rect x="6" y="1" width="4" height="3" fill="#00b000"/><rect x="11" y="1" width="4" height="3" fill="#00b000"/><rect x="6" y="4" width="9" height="2" fill="#e0d000"/><path d="M7,6.5 H11 V3.5 L16,8 L11,12.5 V9.5 H7Z" fill="#60e040" stroke="#108010" stroke-width="0.8"/></svg>
<svg class="a" style="left:341px;top:293px" width="17" height="14" viewBox="0 0 17 14"><rect x="0.5" y="0.5" width="15" height="12" rx="1.5" fill="#d0d0d0" stroke="#a8a8a8"/><path d="M1,4.5H15M1,8.5H15M5.5,1V12M10.5,1V12" stroke="#b0b0b0" stroke-width="1"/><path d="M1.5,0.5 L14,12.5 M14,0.5 L1.5,12.5" stroke="#909090" stroke-width="2"/></svg>
<div class="a" style="left:362px;top:289px;width:2px;height:21px;border-left:1px solid #a0a0a0;border-right:1px solid #fff"></div>
<svg class="a" style="left:369px;top:292px" width="17" height="16" viewBox="0 0 17 16"><rect x="4.5" y="3.5" width="12" height="10" rx="1.5" fill="#d4d4d4" stroke="#b8b8b8"/><path d="M5,7.5H16M5,11.5H16M9.5,4V13M14.5,4V13" stroke="#c0c0c0" stroke-width="1"/><rect x="0.5" y="1.5" width="6" height="13" fill="#e4e4e4"/><rect x="1" y="5.5" width="5" height="5" fill="#f4f4f4"/><path d="M1.5,6.5h1m2,0h1M2.5,8.0h1m2,0h1" stroke="#909090"/><path d="M0.5,1.5V14.5M0.5,1.5H6M0.5,14.5H6M0.5,5.5H6M0.5,10.5H6" fill="none" stroke="#404040" stroke-width="1"/><path d="M6.5,1.5V5.5M6.5,10.5V14.5" stroke="#404040"/><path d="M4.5,8 L7.5,5.5 V7 H10 V9 H7.5 V10.5Z" fill="#303030"/><circle cx="11.5" cy="8" r="1.3" fill="none" stroke="#404040" stroke-width="0.8"/><circle cx="14" cy="8" r="1.3" fill="none" stroke="#404040" stroke-width="0.8"/></svg>
<svg class="a" style="left:391px;top:292px" width="17" height="16" viewBox="0 0 17 16"><rect x="4.5" y="4.5" width="12" height="11" rx="1.5" fill="#d0d0d0" stroke="#a8a8a8"/><path d="M5,8.5H16M5,12.5H16M9.5,5V15M14.5,5V15" stroke="#b8b8b8" stroke-width="1"/><rect x="0.5" y="2" width="7" height="13" fill="#e4e4e4"/><rect x="1" y="6" width="6" height="5" fill="#f4f4f4"/><path d="M1.5,7h1m2,0h1M2.5,8.5h1m2,0h1" stroke="#909090"/><path d="M0.5,2V15M0.5,2H7M0.5,15H7M0.5,6H7M0.5,11H7" fill="none" stroke="#404040" stroke-width="1"/><path d="M7.5,2V15" stroke="#404040"/><path d="M7,8.5 L13.5,1.5 L16,4 L9.5,11 H7Z" fill="#d8d8d8" stroke="#404040" stroke-width="1"/></svg>
<svg class="a" style="left:413px;top:292px" width="17" height="16" viewBox="0 0 17 16"><rect x="5.5" y="3.5" width="11" height="10" rx="1.5" fill="#d4d4d4" stroke="#b8b8b8"/><path d="M6,7.5H16M6,11.5H16M10.5,4V13M15.5,4V13" stroke="#c0c0c0" stroke-width="1"/><rect x="0.5" y="1.5" width="8" height="13" fill="#e4e4e4"/><rect x="1" y="5.5" width="7" height="5" fill="#f4f4f4"/><path d="M1.5,6.5h1m2,0h1M2.5,8.0h1m2,0h1" stroke="#909090"/><path d="M0.5,1.5V14.5M0.5,1.5H8M0.5,14.5H8M0.5,5.5H8M0.5,10.5H8" fill="none" stroke="#404040" stroke-width="1"/><path d="M8.5,1.5V14.5" stroke="#404040"/><path d="M16,8 L13,5.5 V7 H9 V9 H13 V10.5Z" fill="#404040"/></svg>
<svg class="a" style="left:441px;top:291px" width="17" height="17" viewBox="0 0 17 17"><rect x="4.5" y="5.5" width="12" height="10" rx="1.5" fill="#d4d4d4" stroke="#b8b8b8"/><path d="M5,9.5H16M5,13.5H16M9.5,6V15M14.5,6V15" stroke="#c0c0c0" stroke-width="1"/><rect x="0.5" y="2.5" width="5" height="13" fill="#e4e4e4"/><rect x="1" y="6.5" width="4" height="5" fill="#f4f4f4"/><path d="M1.5,7.5h1m2,0h1M2.5,9.0h1m2,0h1" stroke="#909090"/><path d="M0.5,2.5V15.5M0.5,2.5H5M0.5,15.5H5M0.5,6.5H5M0.5,11.5H5" fill="none" stroke="#404040" stroke-width="1"/><path d="M5.5,2.5V15.5" stroke="#404040"/><text x="8.5" y="6.5" font-family="Liberation Sans" font-size="7" font-weight="bold" fill="#404040">12</text><path d="M13,8 V11.5 H8.5 M10.5,9.5 L8.5,11.5 L10.5,13.5" fill="none" stroke="#404040" stroke-width="1.3"/></svg>
<div class="a" style="left:434px;top:289px;width:2px;height:21px;border-left:1px solid #a0a0a0;border-right:1px solid #fff"></div>
<svg class="a" style="left:441px;top:291px" width="17" height="17" viewBox="0 0 17 17"><rect x="4.5" y="5.5" width="12" height="10" rx="1.5" fill="#d0d0d0" stroke="#b8b8b8"/><path d="M5,9.5H16M5,13.5H16M9.5,6V15M14.5,6V15" stroke="#c0c0c0" stroke-width="1"/><rect x="0.5" y="3.5" width="5" height="12" fill="#d8d8d8" stroke="#404040"/><path d="M1,7H5M1,11H5" stroke="#606060" stroke-dasharray="1,1"/><text x="9" y="6" font-family="Liberation Sans" font-size="6.5" font-weight="bold" fill="#404040">12</text><path d="M12,8 V11 H7 M9,9 L7,11 L9,13" fill="none" stroke="#404040" stroke-width="1.3"/></svg>
<svg class="a" style="left:467px;top:304px" width="7" height="4" viewBox="0 0 7 4"><polygon points="0,0 7,0 3.5,3.5" fill="#000"/></svg>
<div class="a" style="left:480px;top:289px;width:3px;height:21px;border-left:2px solid #fff;border-right:1px solid #a0a0a0"></div>
<svg class="a" style="left:491px;top:291px" width="16" height="17" viewBox="0 0 16 17"><circle cx="7.75" cy="8.5" r="7.6" fill="#5c5c5c"/><g ><path d="M9.2,12.2 C12,10.5 11.8,5 8.2,5 C6,5 4.8,6.6 4.6,8.8" fill="none" stroke="#fff" stroke-width="2.3"/><polygon points="1.6,8 7.6,8.4 4.3,13" fill="#fff"/></g></svg>
<svg class="a" style="left:513px;top:291px" width="16" height="17" viewBox="0 0 16 17"><circle cx="7.75" cy="8.5" r="7.6" fill="#5c5c5c"/><g transform="translate(15.5,0) scale(-1,1)"><path d="M9.2,12.2 C12,10.5 11.8,5 8.2,5 C6,5 4.8,6.6 4.6,8.8" fill="none" stroke="#fff" stroke-width="2.3"/><polygon points="1.6,8 7.6,8.4 4.3,13" fill="#fff"/></g></svg>
<div class="a" style="left:534px;top:289px;width:2px;height:21px;border-left:1px solid #a0a0a0;border-right:1px solid #fff"></div>
<svg class="a" style="left:543px;top:292px" width="13" height="16" viewBox="0 0 13 16"><path d="M3,1 L8,10 M10,1 L5,10" stroke="#909090" stroke-width="1.3"/><circle cx="3.5" cy="12.5" r="2.2" fill="none" stroke="#808080" stroke-width="1.3"/><circle cx="9.5" cy="12.5" r="2.2" fill="none" stroke="#808080" stroke-width="1.3"/></svg>
<svg class="a" style="left:563px;top:291px" width="17" height="17" viewBox="0 0 17 17"><path d="M0.5,1.5 H6 L8,3.5 V12.5 H0.5Z" fill="#e0ecff" stroke="#5060c0"/><path d="M2,6H7M2,8H7M2,10H7" stroke="#90b0e8"/><path d="M5.5,5.5 H11.5 L14,8 V16.5 H5.5Z" fill="#e8f0ff" stroke="#5060c0"/><path d="M7,10H13M7,12H13M7,14H13" stroke="#80a8f0"/></svg>
<svg class="a" style="left:585px;top:291px" width="17" height="17" viewBox="0 0 17 17"><rect x="0.5" y="2" width="10" height="13" rx="2" fill="#d8d8d8" stroke="#b8b8b8"/><rect x="3" y="0.5" width="5" height="3" rx="1" fill="#d0d0d0" stroke="#a8a8a8"/><path d="M5.5,6.5 H12 L14.5,9 V16.5 H5.5Z" fill="#e4e4e4" stroke="#a0a0a0"/><path d="M7,11H13M7,13H13" stroke="#a8a8a8"/></svg>
<svg class="a" style="left:607px;top:292px" width="16" height="16" viewBox="0 0 16 16"><path d="M1.5,1.5 L14,14 M14,1.5 L1.5,14" stroke="#8a8a8a" stroke-width="2.4"/></svg>
<div class="a" style="left:628px;top:289px;width:2px;height:21px;border-left:1px solid #a0a0a0;border-right:1px solid #fff"></div>
<svg class="a" style="left:634px;top:292px" width="17" height="16" viewBox="0 0 17 16"><rect x="2.5" y="1" width="13" height="13.5" fill="#d8d8d8" stroke="#a0a0a0"/><path d="M2,1.5H15" stroke="#a0a0a0" stroke-width="1.5"/><rect x="5" y="4.5" width="8.5" height="8" fill="#c8c8c8"/><path d="M0.5,7 H5 V4.5 L9,8 L5,11.5 V9 H0.5Z" fill="#b8b8b8" stroke="#909090" stroke-width="0.8"/></svg>
<svg class="a" style="left:656px;top:292px" width="17" height="16" viewBox="0 0 17 16"><rect x="1.5" y="1" width="13" height="13.5" fill="#d8d8d8" stroke="#a0a0a0"/><path d="M1,1.5H15" stroke="#a0a0a0" stroke-width="1.5"/><rect x="4" y="4.5" width="8.5" height="8" fill="#c8c8c8"/><path d="M6,0.5 H10 V5 H12.5 L8,9.5 L3.5,5 H6Z" fill="#b8b8b8" stroke="#909090" stroke-width="0.8"/></svg>
<svg class="a" style="left:683px;top:304px" width="7" height="4" viewBox="0 0 7 4"><polygon points="0,0 7,0 3.5,3.5" fill="#000"/></svg>
<div class="a" style="left:695px;top:289px;width:3px;height:21px;border-left:2px solid #fff;border-right:1px solid #a0a0a0"></div>
<svg class="a" style="left:706px;top:292px" width="17" height="16" viewBox="0 0 17 16"><rect x="1" y="4" width="15" height="11" rx="1.5" fill="#7f8fb8"/><rect x="0.5" y="3.5" width="15" height="11" rx="1.5" fill="#dcefff" stroke="#7088c8"/><path d="M1,7.5H15M1,11.5H15M5.5,4V14M10.5,4V14" stroke="#b8c8d8" stroke-width="1"/><path d="M1,9 C3,6 6,5 10,5 L13,3 L15,0.5 L14,6 L12,7 C9,9 6,11 4,14 L5,10Z" fill="#3060c0" stroke="#102080" stroke-width="0.6"/><circle cx="5" cy="3.5" r="1" fill="#0c0"/><circle cx="9" cy="3.5" r="1" fill="#0c0"/><rect x="13" y="5.5" width="3" height="1.5" fill="#ee0"/></svg>
<div class="a" style="left:728px;top:289px;width:2px;height:21px;border-left:1px solid #a0a0a0;border-right:1px solid #fff"></div>
<svg class="a" style="left:734px;top:292px" width="17" height="17" viewBox="0 0 17 17"><rect x="1" y="4" width="15" height="11" rx="1.5" fill="#7f8fb8"/><rect x="0.5" y="3.5" width="15" height="11" rx="1.5" fill="#dcefff" stroke="#7088c8"/><path d="M1,7.5H15M1,11.5H15M5.5,4V14M10.5,4V14" stroke="#b8c8d8" stroke-width="1"/><rect x="3" y="11" width="9" height="3" fill="#f00000"/><path d="M5.5,2.5 H9.5 V6 H12 L7.5,10.5 L3,6 H5.5Z" fill="#ff6000" stroke="#e00000" stroke-width="1"/><circle cx="4" cy="3.5" r="1" fill="#0c0"/><circle cx="11" cy="3.5" r="1" fill="#0c0"/></svg>
<svg class="a" style="left:757px;top:292px" width="17" height="17" viewBox="0 0 17 17"><rect x="1" y="4" width="15" height="11" rx="1.5" fill="#7f8fb8"/><rect x="0.5" y="3.5" width="15" height="11" rx="1.5" fill="#dcefff" stroke="#7088c8"/><path d="M1,7.5H15M1,11.5H15M5.5,4V14M10.5,4V14" stroke="#b8c8d8" stroke-width="1"/><rect x="3" y="3" width="9" height="3" fill="#f00000"/><path d="M5.5,14 H9.5 V10.5 H12 L7.5,6 L3,10.5 H5.5Z" fill="#ff8000" stroke="#e00000" stroke-width="1"/></svg>
<div class="a" style="left:776px;top:289px;width:22px;height:21px;border-left:1px solid #a0a0a0;border-top:1px solid #a0a0a0;border-right:1px solid #fff;border-bottom:1px solid #fff;background:#e4e4e4"></div>
<svg class="a" style="left:780px;top:292px" width="17" height="17" viewBox="0 0 17 17"><rect x="1" y="4" width="15" height="11" rx="1.5" fill="#7f8fb8"/><rect x="0.5" y="3.5" width="15" height="11" rx="1.5" fill="#dcefff" stroke="#7088c8"/><path d="M1,7.5H15M1,11.5H15M5.5,4V14M10.5,4V14" stroke="#b8c8d8" stroke-width="1"/><rect x="3" y="2" width="9" height="2.5" fill="#f00000"/><rect x="3" y="13" width="9" height="2.5" fill="#f00000"/><path d="M7.5,4.5 L11,8.7 L7.5,12.8 L4,8.7Z" fill="#ff6000" stroke="#e00000"/><rect x="11" y="8" width="4" height="1.3" fill="#ee0"/></svg>
<svg class="a" style="left:801px;top:293px" width="17" height="14" viewBox="0 0 17 14"><rect x="0.5" y="0.5" width="15" height="12" rx="1.5" fill="#d0d0d0" stroke="#b8b8b8"/><path d="M1,4.5H15M1,8.5H15M5.5,1V12M10.5,1V12" stroke="#c0c0c0" stroke-width="1"/><path d="M2.5,7 L5,11 L11,1.5" fill="none" stroke="#a0a0a0" stroke-width="1.5"/></svg>
<svg class="a" style="left:822px;top:292px" width="18" height="16" viewBox="0 0 18 16"><defs><linearGradient id="pg" x1="0" y1="0" x2="0" y2="1"><stop offset="0" stop-color="#8090a8"/><stop offset="0.4" stop-color="#f0f4f8"/><stop offset="1" stop-color="#506070"/></linearGradient></defs><path d="M0.5,3 H7 L9,1.5 H17 V13.5 H9 L7,12 H0.5Z" fill="url(#pg)" stroke="#6a7a8a" stroke-width="0.6"/><path d="M7.5,3V12M9.5,1.5V13.5" stroke="#506070" stroke-width="0.8"/></svg>
<svg class="a" style="left:845px;top:292px" width="17" height="16" viewBox="0 0 17 16"><rect x="1" y="0" width="15" height="15" fill="#fff"/><path d="M1.5,0V15.5H16" fill="none" stroke="#404040" stroke-width="1"/><path d="M2,1 C4,10 6,14 8,13 C10,12 12,4 15,1" fill="none" stroke="#e02020" stroke-width="1"/><path d="M2,13 L8,2 L15,10" fill="none" stroke="#20c020" stroke-width="1"/><path d="M3,8 C5,4 7,4 9,9 C11,13 13,14 15,13" fill="none" stroke="#2020e0" stroke-width="1"/></svg>
<svg class="a" style="left:867px;top:292px" width="17" height="16" viewBox="0 0 17 16"><rect x="1" y="0" width="15" height="15" fill="#fff"/><path d="M1.5,0V15.5H16" fill="none" stroke="#404040" stroke-width="1"/><rect x="4" y="3" width="11" height="3" fill="#9aa0e0"/><path d="M3,1.5 C7,0 11,0 15,1.5" stroke="#e02020" fill="none"/><path d="M1,15 L5,6 L7,8 L10,4 L6,12Z" fill="#f0f000" stroke="#c0a000" stroke-width="0.6"/><path d="M6,11 L11,7 L15,12" fill="none" stroke="#a020c0" stroke-width="1.3"/></svg>
<svg class="a" style="left:889px;top:292px" width="17" height="16" viewBox="0 0 17 16"><path d="M1.5,0V15.5H16" fill="none" stroke="#a0a0a0" stroke-width="1.5"/><rect x="4" y="3" width="11" height="3" fill="#c8c8c8"/><path d="M3,1.5 C7,0 11,0 15,1.5" stroke="#b0b0b0" fill="none"/><path d="M3,13 L6,8 L9,11 L12,7 L15,12" fill="none" stroke="#b0b0b0" stroke-width="2"/></svg>
<svg class="a" style="left:910px;top:292px" width="17" height="16" viewBox="0 0 17 16"><rect x="1" y="3" width="15" height="11" rx="1.5" fill="#7f8fb8"/><rect x="0.5" y="2.5" width="15" height="11" rx="1.5" fill="#dcefff" stroke="#7088c8"/><path d="M1,6.5H15M1,10.5H15M5.5,3V13M10.5,3V13" stroke="#b8c8d8" stroke-width="1"/><rect x="4" y="4" width="9" height="2.5" fill="#10a010"/><rect x="4" y="5" width="9" height="1.5" fill="#e0e000"/><path d="M2,5.5 L3.5,4 L5,5.5 L3.5,7Z M2,10 L3.5,8.5 L5,10 L3.5,11.5Z" fill="#0000c0"/><path d="M6,10H13" stroke="#1030b0" stroke-width="2" stroke-dasharray="2,1"/><path d="M6,5.5H13" stroke="#1030b0" stroke-width="1.5" stroke-dasharray="2,1"/></svg>
<svg class="a" style="left:937px;top:304px" width="7" height="4" viewBox="0 0 7 4"><polygon points="0,0 7,0 3.5,3.5" fill="#000"/></svg>
<div class="a" style="left:950px;top:289px;width:3px;height:21px;border-left:2px solid #fff;border-right:1px solid #a0a0a0"></div>
<svg class="a" style="left:960px;top:291px" width="17" height="16" viewBox="0 0 17 16"><rect x="2" y="5" width="15" height="10" rx="1.5" fill="#7f8fb8"/><rect x="1.5" y="4.5" width="15" height="10" rx="1.5" fill="#dcefff" stroke="#7088c8"/><path d="M2,8.5H16M2,12.5H16M6.5,5V14M11.5,5V14" stroke="#b8c8d8" stroke-width="1"/><rect x="12" y="5" width="4" height="2" fill="#0c0"/><rect x="12" y="7" width="4" height="1.5" fill="#ee0"/><circle cx="6" cy="5.5" r="5" fill="#e8f0ff" opacity="0.9"/><text x="6" y="9" text-anchor="middle" font-family="Liberation Serif" font-weight="bold" font-size="10" fill="#1030a0">i</text></svg>
<svg class="a" style="left:982px;top:291px" width="17" height="16" viewBox="0 0 17 16"><rect x="1" y="4" width="15" height="11" rx="1.5" fill="#7f8fb8"/><rect x="0.5" y="3.5" width="15" height="11" rx="1.5" fill="#dcefff" stroke="#7088c8"/><path d="M1,7.5H15M1,11.5H15M5.5,4V14M10.5,4V14" stroke="#b8c8d8" stroke-width="1"/><rect x="5" y="4" width="4" height="2" fill="#0c0"/><rect x="10" y="4" width="4" height="2" fill="#0c0"/><circle cx="8" cy="10" r="5.2" fill="#1850c8" stroke="#fff" stroke-width="1"/><text x="8" y="13.5" text-anchor="middle" font-family="Liberation Sans" font-weight="bold" font-size="8.5" fill="#fff">?</text></svg>
<svg class="a" style="left:1005px;top:291px" width="17" height="16" viewBox="0 0 17 16"><rect x="1" y="4" width="15" height="11" rx="1.5" fill="#7f8fb8"/><rect x="0.5" y="3.5" width="15" height="11" rx="1.5" fill="#dcefff" stroke="#7088c8"/><path d="M1,7.5H15M1,11.5H15M5.5,4V14M10.5,4V14" stroke="#b8c8d8" stroke-width="1"/><rect x="5" y="4" width="4" height="2" fill="#0c0"/><rect x="10" y="4" width="4" height="2" fill="#0c0"/><circle cx="8.5" cy="10" r="5.2" fill="#d01010"/><path d="M6.5,8L10.5,12M10.5,8L6.5,12" stroke="#fff" stroke-width="1.6"/></svg>
<svg class="a" style="left:1031px;top:304px" width="7" height="4" viewBox="0 0 7 4"><polygon points="0,0 7,0 3.5,3.5" fill="#000"/></svg>
<div class="a" style="left:264px;top:321px;width:829px;height:1px;background:#606060;"></div>
<div class="a" style="left:264px;top:321px;width:1px;height:137px;background:#606060;"></div>
<div class="a" style="left:265px;top:322px;width:828px;height:19px;background:#d3d3d3;"></div>
<div class="a" style="left:265px;top:341px;width:828px;height:1px;background:#808080;"></div>
<div class="a" style="left:1077px;top:341px;width:16px;height:118px;background:#f2f2f2;"></div>
<div class="a" style="left:1093px;top:321px;width:1px;height:138px;background:#a0a0a0;"></div>
<div class="a" style="left:265px;top:342px;width:77px;height:39px;background:#d3d3d3;"></div>
<div class="a" style="left:265px;top:361px;width:77px;height:1px;background:#808080;"></div>
<div class="a" style="left:342px;top:342px;width:1px;height:116px;background:#808080;"></div>
<div class="a" style="left:343px;top:342px;width:90px;height:19px;background:#33cc33;"></div>
<div class="a" style="left:343px;top:361px;width:90px;height:1px;background:#808080;"></div>
<div class="a" style="left:343px;top:362px;width:90px;height:19px;background:#f0f000;"></div>
<div class="t" style="left:343px;width:90px;text-align:center;top:345.64px;font-size:12px;font-weight:bold;color:#000;">ANGLE</div>
<div class="t" style="left:343px;width:90px;text-align:center;top:365.64px;font-size:12px;font-weight:bold;color:#000;">°</div>
<div class="a" style="left:433px;top:342px;width:1px;height:116px;background:#808080;"></div>
<div class="a" style="left:434px;top:342px;width:93px;height:19px;background:#33cc33;"></div>
<div class="a" style="left:434px;top:361px;width:93px;height:1px;background:#808080;"></div>
<div class="a" style="left:434px;top:362px;width:93px;height:19px;background:#f0f000;"></div>
<div class="t" style="left:434px;width:93px;text-align:center;top:345.64px;font-size:12px;font-weight:bold;color:#000;">MOHR1</div>
<div class="t" style="left:434px;width:93px;text-align:center;top:365.64px;font-size:12px;font-weight:bold;color:#000;">N/mm²</div>
<div class="a" style="left:527px;top:342px;width:1px;height:116px;background:#808080;"></div>
<div class="a" style="left:528px;top:342px;width:93px;height:19px;background:#33cc33;"></div>
<div class="a" style="left:528px;top:361px;width:93px;height:1px;background:#808080;"></div>
<div class="a" style="left:528px;top:362px;width:93px;height:19px;background:#f0f000;"></div>
<div class="t" style="left:528px;width:93px;text-align:center;top:345.64px;font-size:12px;font-weight:bold;color:#000;">MOHR2</div>
<div class="t" style="left:528px;width:93px;text-align:center;top:365.64px;font-size:12px;font-weight:bold;color:#000;">N/mm²</div>
<div class="a" style="left:621px;top:342px;width:1px;height:116px;background:#808080;"></div>
<div class="a" style="left:622px;top:342px;width:98px;height:19px;background:#33cc33;"></div>
<div class="a" style="left:622px;top:361px;width:98px;height:1px;background:#808080;"></div>
<div class="a" style="left:622px;top:362px;width:98px;height:19px;background:#f0f000;"></div>
<div class="t" style="left:622px;width:98px;text-align:center;top:345.64px;font-size:12px;font-weight:bold;color:#000;">TRESCA</div>
<div class="t" style="left:622px;width:98px;text-align:center;top:365.64px;font-size:12px;font-weight:bold;color:#000;">N/mm²</div>
<div class="a" style="left:720px;top:342px;width:1px;height:116px;background:#808080;"></div>
<div class="a" style="left:721px;top:342px;width:87px;height:19px;background:#33cc33;"></div>
<div class="a" style="left:721px;top:361px;width:87px;height:1px;background:#808080;"></div>
<div class="a" style="left:721px;top:362px;width:87px;height:19px;background:#f0f000;"></div>
<div class="t" style="left:721px;width:87px;text-align:center;top:345.64px;font-size:12px;font-weight:bold;color:#000;">MISES</div>
<div class="t" style="left:721px;width:87px;text-align:center;top:365.64px;font-size:12px;font-weight:bold;color:#000;">N/mm²</div>
<div class="a" style="left:808px;top:342px;width:1px;height:116px;background:#808080;"></div>
<div class="a" style="left:809px;top:342px;width:86px;height:19px;background:#33cc33;"></div>
<div class="a" style="left:809px;top:361px;width:86px;height:1px;background:#808080;"></div>
<div class="a" style="left:809px;top:362px;width:86px;height:19px;background:#f0f000;"></div>
<div class="t" style="left:809px;width:86px;text-align:center;top:345.64px;font-size:12px;font-weight:bold;color:#000;">SXHT</div>
<div class="t" style="left:809px;width:86px;text-align:center;top:365.64px;font-size:12px;font-weight:bold;color:#000;">N/mm²</div>
<div class="a" style="left:895px;top:342px;width:1px;height:116px;background:#808080;"></div>
<div class="a" style="left:896px;top:342px;width:86px;height:19px;background:#33cc33;"></div>
<div class="a" style="left:896px;top:361px;width:86px;height:1px;background:#808080;"></div>
<div class="a" style="left:896px;top:362px;width:86px;height:19px;background:#f0f000;"></div>
<div class="t" style="left:896px;width:86px;text-align:center;top:345.64px;font-size:12px;font-weight:bold;color:#000;">SFHT</div>
<div class="t" style="left:896px;width:86px;text-align:center;top:365.64px;font-size:12px;font-weight:bold;color:#000;">N/mm²</div>
<div class="a" style="left:982px;top:342px;width:1px;height:116px;background:#808080;"></div>
<div class="a" style="left:983px;top:342px;width:93px;height:19px;background:#33cc33;"></div>
<div class="a" style="left:983px;top:361px;width:93px;height:1px;background:#808080;"></div>
<div class="a" style="left:983px;top:362px;width:93px;height:19px;background:#f0f000;"></div>
<div class="t" style="left:983px;width:93px;text-align:center;top:345.64px;font-size:12px;font-weight:bold;color:#000;">SHOOP</div>
<div class="t" style="left:983px;width:93px;text-align:center;top:365.64px;font-size:12px;font-weight:bold;color:#000;">N/mm²</div>
<div class="a" style="left:1076px;top:342px;width:1px;height:116px;background:#808080;"></div>
<div class="a" style="left:265px;top:381px;width:812px;height:1px;background:#808080;"></div>
<div class="a" style="left:265px;top:382px;width:19px;height:18px;background:#eeeeee;"></div>
<div class="a" style="left:284px;top:382px;width:1px;height:18px;background:#808080;"></div>
<div class="a" style="left:285px;top:382px;width:57px;height:18px;background:#fff;"></div>
<div class="t" style="left:138.5px;width:200px;text-align:right;top:385.49px;font-size:11px;color:#000;">1</div>
<div class="a" style="left:343px;top:382px;width:90px;height:18px;background:#80ff00;"></div>
<div class="t" style="left:230.5px;width:200px;text-align:right;top:385.49px;font-size:11px;color:#000;">0</div>
<div class="a" style="left:434px;top:382px;width:93px;height:18px;background:#fff;"></div>
<div class="t" style="left:324.5px;width:200px;text-align:right;top:385.49px;font-size:11px;color:#000;">124,51</div>
<div class="a" style="left:528px;top:382px;width:93px;height:18px;background:#fff;"></div>
<div class="t" style="left:418.5px;width:200px;text-align:right;top:385.49px;font-size:11px;color:#000;">−547,4</div>
<div class="a" style="left:622px;top:382px;width:98px;height:18px;background:#fff;"></div>
<div class="t" style="left:517.5px;width:200px;text-align:right;top:385.49px;font-size:11px;color:#000;">307,7</div>
<div class="a" style="left:721px;top:382px;width:87px;height:18px;background:#fff;"></div>
<div class="t" style="left:605.5px;width:200px;text-align:right;top:385.49px;font-size:11px;color:#000;">563,6</div>
<div class="a" style="left:809px;top:382px;width:86px;height:18px;background:#fff;"></div>
<div class="t" style="left:692.5px;width:200px;text-align:right;top:385.49px;font-size:11px;color:#000;">−547,4</div>
<div class="a" style="left:896px;top:382px;width:86px;height:18px;background:#fff;"></div>
<div class="t" style="left:779.5px;width:200px;text-align:right;top:385.49px;font-size:11px;color:#000;">124,51</div>
<div class="a" style="left:983px;top:382px;width:93px;height:18px;background:#00bfff;"></div>
<div class="t" style="left:873.5px;width:200px;text-align:right;top:385.49px;font-size:11px;color:#000;">34,99</div>
<div class="a" style="left:265px;top:400px;width:812px;height:1px;background:#808080;"></div>
<div class="a" style="left:265px;top:401px;width:19px;height:18px;background:#eeeeee;"></div>
<div class="a" style="left:284px;top:401px;width:1px;height:18px;background:#808080;"></div>
<div class="a" style="left:285px;top:401px;width:57px;height:18px;background:#fff;"></div>
<div class="t" style="left:138.5px;width:200px;text-align:right;top:404.49px;font-size:11px;color:#000;">7</div>
<div class="a" style="left:343px;top:401px;width:90px;height:18px;background:#fff;"></div>
<div class="t" style="left:230.5px;width:200px;text-align:right;top:404.49px;font-size:11px;color:#000;">45,0</div>
<div class="a" style="left:434px;top:401px;width:93px;height:18px;background:#80ff00;"></div>
<div class="t" style="left:324.5px;width:200px;text-align:right;top:404.49px;font-size:11px;color:#000;">35,96</div>
<div class="a" style="left:528px;top:401px;width:93px;height:18px;background:#ffa500;"></div>
<div class="t" style="left:418.5px;width:200px;text-align:right;top:404.49px;font-size:11px;color:#000;">−520,5</div>
<div class="a" style="left:622px;top:401px;width:98px;height:18px;background:#80ff00;"></div>
<div class="t" style="left:517.5px;width:200px;text-align:right;top:404.49px;font-size:11px;color:#000;">276,9</div>
<div class="a" style="left:721px;top:401px;width:87px;height:18px;background:#80ff00;"></div>
<div class="t" style="left:605.5px;width:200px;text-align:right;top:404.49px;font-size:11px;color:#000;">536,7</div>
<div class="a" style="left:809px;top:401px;width:86px;height:18px;background:#ffa500;"></div>
<div class="t" style="left:692.5px;width:200px;text-align:right;top:404.49px;font-size:11px;color:#000;">−520,5</div>
<div class="a" style="left:896px;top:401px;width:86px;height:18px;background:#80ff00;"></div>
<div class="t" style="left:779.5px;width:200px;text-align:right;top:404.49px;font-size:11px;color:#000;">35,96</div>
<div class="a" style="left:983px;top:401px;width:93px;height:18px;background:#fff;"></div>
<div class="t" style="left:873.5px;width:200px;text-align:right;top:404.49px;font-size:11px;color:#000;">34,99</div>
<div class="a" style="left:265px;top:419px;width:812px;height:1px;background:#808080;"></div>
<div class="a" style="left:265px;top:420px;width:19px;height:18px;background:#eeeeee;"></div>
<div class="a" style="left:284px;top:420px;width:1px;height:18px;background:#808080;"></div>
<div class="a" style="left:285px;top:420px;width:57px;height:18px;background:#fff;"></div>
<div class="t" style="left:138.5px;width:200px;text-align:right;top:423.49px;font-size:11px;color:#000;">37</div>
<div class="a" style="left:343px;top:420px;width:90px;height:18px;background:#fff;"></div>
<div class="t" style="left:230.5px;width:200px;text-align:right;top:423.49px;font-size:11px;color:#000;">270,0</div>
<div class="a" style="left:434px;top:420px;width:93px;height:18px;background:#ffa500;"></div>
<div class="t" style="left:324.5px;width:200px;text-align:right;top:423.49px;font-size:11px;color:#000;">155,07</div>
<div class="a" style="left:528px;top:420px;width:93px;height:18px;background:#80ff00;"></div>
<div class="t" style="left:418.5px;width:200px;text-align:right;top:423.49px;font-size:11px;color:#000;">−556,0</div>
<div class="a" style="left:622px;top:420px;width:98px;height:18px;background:#ffa500;"></div>
<div class="t" style="left:517.5px;width:200px;text-align:right;top:423.49px;font-size:11px;color:#000;">318,7</div>
<div class="a" style="left:721px;top:420px;width:87px;height:18px;background:#ffa500;"></div>
<div class="t" style="left:605.5px;width:200px;text-align:right;top:423.49px;font-size:11px;color:#000;">575,7</div>
<div class="a" style="left:809px;top:420px;width:86px;height:18px;background:#80ff00;"></div>
<div class="t" style="left:692.5px;width:200px;text-align:right;top:423.49px;font-size:11px;color:#000;">−556,0</div>
<div class="a" style="left:896px;top:420px;width:86px;height:18px;background:#ffa500;"></div>
<div class="t" style="left:779.5px;width:200px;text-align:right;top:423.49px;font-size:11px;color:#000;">155,07</div>
<div class="a" style="left:983px;top:420px;width:93px;height:18px;background:#fff;"></div>
<div class="t" style="left:873.5px;width:200px;text-align:right;top:423.49px;font-size:11px;color:#000;">34,99</div>
<div class="a" style="left:265px;top:438px;width:812px;height:1px;background:#808080;"></div>
<div class="a" style="left:265px;top:439px;width:19px;height:18px;background:#eeeeee;"></div>
<div class="a" style="left:284px;top:439px;width:1px;height:18px;background:#808080;"></div>
<div class="a" style="left:285px;top:439px;width:57px;height:18px;background:#fff;"></div>
<div class="t" style="left:138.5px;width:200px;text-align:right;top:442.49px;font-size:11px;color:#000;">48</div>
<div class="a" style="left:343px;top:439px;width:90px;height:18px;background:#ffa500;"></div>
<div class="t" style="left:230.5px;width:200px;text-align:right;top:442.49px;font-size:11px;color:#000;">352,5</div>
<div class="a" style="left:434px;top:439px;width:93px;height:18px;background:#fff;"></div>
<div class="t" style="left:324.5px;width:200px;text-align:right;top:442.49px;font-size:11px;color:#000;">125,63</div>
<div class="a" style="left:528px;top:439px;width:93px;height:18px;background:#fff;"></div>
<div class="t" style="left:418.5px;width:200px;text-align:right;top:442.49px;font-size:11px;color:#000;">−547,8</div>
<div class="a" style="left:622px;top:439px;width:98px;height:18px;background:#fff;"></div>
<div class="t" style="left:517.5px;width:200px;text-align:right;top:442.49px;font-size:11px;color:#000;">308,1</div>
<div class="a" style="left:721px;top:439px;width:87px;height:18px;background:#fff;"></div>
<div class="t" style="left:605.5px;width:200px;text-align:right;top:442.49px;font-size:11px;color:#000;">564,0</div>
<div class="a" style="left:809px;top:439px;width:86px;height:18px;background:#fff;"></div>
<div class="t" style="left:692.5px;width:200px;text-align:right;top:442.49px;font-size:11px;color:#000;">−547,8</div>
<div class="a" style="left:896px;top:439px;width:86px;height:18px;background:#fff;"></div>
<div class="t" style="left:779.5px;width:200px;text-align:right;top:442.49px;font-size:11px;color:#000;">125,63</div>
<div class="a" style="left:983px;top:439px;width:93px;height:18px;background:#fff;"></div>
<div class="t" style="left:873.5px;width:200px;text-align:right;top:442.49px;font-size:11px;color:#000;">34,99</div>
<div class="a" style="left:265px;top:457px;width:812px;height:1px;background:#808080;"></div>
<div class="a" style="left:265px;top:457px;width:812px;height:1px;background:#606060;"></div>
<div class="a" style="left:342px;top:419px;width:93px;height:20px;background:transparent;border:2px solid #ee1111"></div>
<div class="a" style="left:719px;top:418px;width:91px;height:21px;background:transparent;border:2px solid #ee1111"></div>
<div class="a" style="left:650px;top:319px;width:50px;height:24px;background:transparent;border:2px solid #ee1111"></div>
<div class="t" style="left:444.4px;top:326.04px;font-size:12px;font-weight:bold;color:#000;transform:scaleY(1.05);transform-origin:0 84.65%;">CSTRESS - Detailed check stresses</div>
<div class="t" style="left:652.7px;top:326.47px;font-size:11.5px;font-weight:bold;color:#000;">(Elm 40;</div>
<div class="t" style="left:701.7px;top:327.14px;font-size:10.7px;font-weight:bold;color:#000;">Lcase NEN3650;</div>
<div class="t" style="left:788.3px;top:327.27px;font-size:10.55px;font-weight:bold;color:#000;">CS&nbsp; in 1, Weighing Unused, Redist)</div>
<div class="a" style="left:0px;top:459px;width:1094px;height:1px;background:#a0a0a0;"></div>
<div id="overlay"></div>
<svg class="a" style="left:0;top:0" width="1094" height="536">
<path d="M92.33,307.51 L90,284 L117.04,303.07 A103,44 0 1 1 92.33,307.51 Z" fill="#f0f0f0" stroke="#9a9a9a" stroke-width="1"/>
<path d="M719.19,160.91 L690,178 L749.15,168.54 A128.7,35 0 1 0 719.19,160.91 Z" fill="#f0f0f0" stroke="#9a9a9a" stroke-width="1"/>
<path d="M816.38,459.41 L810,438 L859.75,454.37 A168.5,41 0 1 1 816.38,459.41 Z" fill="#f0f0f0" stroke="#9a9a9a" stroke-width="1"/>
</svg>
<div class="t" style="left:-5.699999999999989px;width:300.0px;text-align:center;top:317.40px;font-size:13px;color:#000;">This yellow-red dot DF</div>
<div class="t" style="left:-5.699999999999989px;width:300.0px;text-align:center;top:331.60px;font-size:13px;color:#000;">status indicates the</div>
<div class="t" style="left:-5.699999999999989px;width:300.0px;text-align:center;top:345.80px;font-size:13px;color:#000;">presence of data table</div>
<div class="t" style="left:-5.699999999999989px;width:300.0px;text-align:center;top:360.00px;font-size:13px;color:#000;">with warning or error</div>
<div class="t" style="left:671px;width:300px;text-align:center;top:116.90px;font-size:13px;color:#000;">This red-shaded dot table</div>
<div class="t" style="left:671px;width:300px;text-align:center;top:131.20px;font-size:13px;color:#000;">status indicates the presence</div>
<div class="t" style="left:671px;width:300px;text-align:center;top:145.50px;font-size:13px;color:#000;">of data with warning or error</div>
<div class="t" style="left:760px;width:300px;text-align:center;top:466.20px;font-size:13px;color:#000;">On element 40, the maximum Von</div>
<div class="t" style="left:760px;width:300px;text-align:center;top:481.00px;font-size:13px;color:#000;">Mises stress of 575.7 N/mm2 occurs at</div>
<div class="t" style="left:760px;width:300px;text-align:center;top:495.80px;font-size:13px;color:#000;">270 degree and is greater than the</div>
<div class="t" style="left:760px;width:300px;text-align:center;top:510.50px;font-size:13px;color:#000;">defined allowable stress of 565 N/mm2</div>
<div class="a" style="left:797px;top:310px;width:145px;height:20px;background:#ffffe1;border-right:1px solid #202020;border-bottom:1px solid #202020"></div>
<div class="t" style="left:801px;top:313.84px;font-size:12px;color:#000;">Show maxima &amp; minima</div>
<svg class="a" style="left:788px;top:306px" width="14" height="22"><path d="M0.5,0.5 L0.5,16 L4,12.5 L7,19 L9.5,18 L6.5,11.5 L11.5,11.5 Z" fill="#fff" stroke="#000" stroke-width="1"/></svg>
<div class="a" style="left:0px;top:0px;width:1094px;height:1px;background:#a0a0a0;"></div>
</body></html>
